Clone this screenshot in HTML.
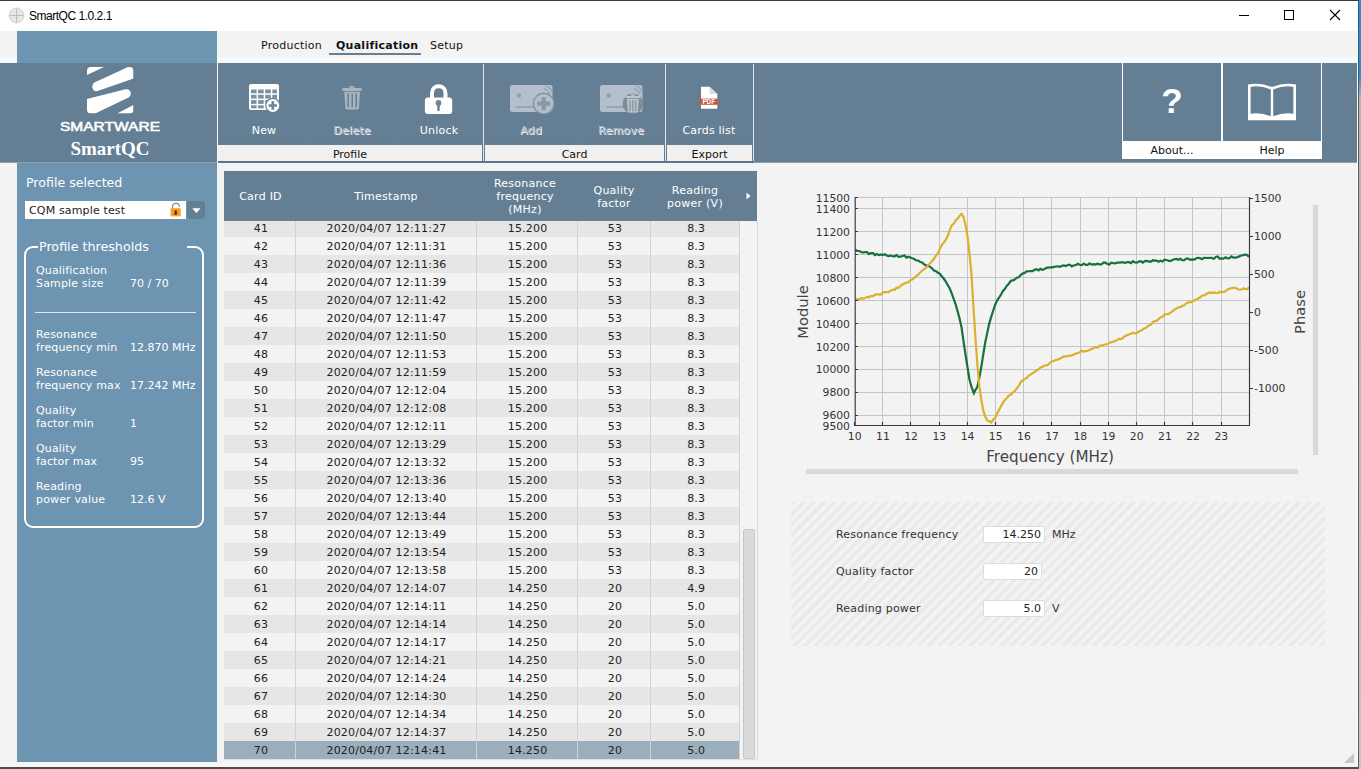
<!DOCTYPE html>
<html lang="en"><head><meta charset="utf-8"><title>SmartQC 1.0.2.1</title>
<style>
*{box-sizing:border-box;margin:0;padding:0}
html,body{width:1361px;height:769px;overflow:hidden;background:#f3f3f3}
body{position:relative;font-family:"DejaVu Sans","Liberation Sans",sans-serif;font-size:11px;color:#222}
.abs{position:absolute}
#titlebar{left:0;top:0;width:1358px;height:31px;background:#fff}
#topline{left:0;top:0;width:1361px;height:1px;background:#3a3a3a}
#title{left:29px;top:9px;font-family:"Liberation Sans",sans-serif;font-size:12px;letter-spacing:-0.480px;color:#000;line-height:15px}
#sidebar{left:17px;top:31px;width:200px;height:731px;background:#6d94b0}
#band{left:0;top:63px;width:1357px;height:99px;background:#647f94;border-bottom:1px solid #8fa2b0;box-sizing:content-box}
#bandline{left:217px;top:31px;width:1px;height:132px;background:#f4f8fb}
#menu span{position:absolute;top:39px;letter-spacing:0.250px;font-size:11px;line-height:14px;color:#111;white-space:nowrap}
.grp{position:absolute;top:145px;height:16px;background:#f0f0f0;text-align:center;font-size:11px;line-height:19px;color:#111}
.vsep{position:absolute;top:64px;width:1px;height:97px;background:#dfe6eb}
.tbtn{position:absolute;top:124px;width:90px;text-align:center;color:#fff;font-size:11px;line-height:14px;letter-spacing:0.200px}
.tbtn.dis{color:#aebbc6;text-shadow:1px 1px 0 #f4f6f8}
.ul{position:absolute;top:138px;height:1px;background:#5f798d}
#bottomline{left:0;top:767px;width:1361px;height:2px;background:#4c4c4c}
#rightline{left:1358px;top:0;width:1px;height:769px;background:linear-gradient(#1f5b86 0,#1f5b86 75px,#5c5c5c 100px,#5c5c5c 100%)}
#rightline2{left:1359px;top:0;width:2px;height:769px;background:linear-gradient(#3c8dbe 0,#3c8dbe 75px,#b4b4b4 100px,#c4c4c4 100%)}
.sb{color:#fff;position:absolute;white-space:nowrap}
.lbl{font-size:11px;line-height:13px;letter-spacing:0.150px}
#thead{left:224px;top:171px;width:533px;height:50px;background:#647f94}
.th{position:absolute;color:#fff;font-size:11px;letter-spacing:0.250px;line-height:13px;text-align:center;transform:translate(-50%,-50%);white-space:nowrap}
.row{position:absolute;left:224px;width:515px;height:18px}
.row.o{background:#e6e6e6}
.row.e{background:#f3f3f3}
.row.sel{background:#9aaebc}
.row span{position:absolute;top:1px;letter-spacing:0.200px;line-height:18px;font-size:11px;color:#222;text-align:center;transform:translateX(-50%);white-space:nowrap}
.csep{position:absolute;top:221px;width:1px;height:538px;background:#d2d2d2}
</style></head>
<body>
<div class="abs" id="titlebar"></div>
<div class="abs" id="topline"></div>
<svg class="abs" style="left:7.500px;top:7px" width="17" height="17" viewBox="0 0 17 17"><circle cx="8.5" cy="8.5" r="7.5" fill="#e6e6e6" stroke="#d4d4d4" stroke-width="1"/><path d="M8.5 1.5V15.5M1.5 8.5H15.5" stroke="#bdbdbd" stroke-width="1" fill="none"/></svg>
<div class="abs" id="title">SmartQC 1.0.2.1</div>
<svg class="abs" style="left:1230px;top:5px" width="120" height="22" viewBox="0 0 120 22"><path d="M9 10.5H19" stroke="#000" stroke-width="1" fill="none"/><rect x="54.5" y="5.5" width="9" height="9" fill="none" stroke="#000" stroke-width="1"/><path d="M100 5L110 15M110 5L100 15" stroke="#000" stroke-width="1.1" fill="none"/></svg>
<div class="abs" style="left:0;top:57px;width:1357px;height:6px;background:#f6f8fa"></div>
<div class="abs" id="sidebar"></div>
<div class="abs" id="band"></div>
<div class="abs" id="bandline"></div>
<div id="menu">
<span style="left:261px">Production</span>
<span style="left:336px;font-weight:bold">Qualification</span>
<span style="left:430px">Setup</span>
</div>
<div class="abs" style="left:329px;top:53px;width:92px;height:2px;background:#647f94"></div>
<div class="grp" style="left:218px;width:264px">Profile</div>
<div class="grp" style="left:485px;width:179px">Card</div>
<div class="grp" style="left:667px;width:85px">Export</div>
<div class="vsep" style="left:483px"></div>
<div class="vsep" style="left:665px"></div>
<div class="vsep" style="left:753px"></div>
<div class="tbtn" style="left:219px">New</div>
<div class="tbtn dis" style="left:307px">Delete</div>
<div class="tbtn" style="left:394px">Unlock</div>
<div class="tbtn dis" style="left:486px">Add</div>
<div class="tbtn dis" style="left:576px">Remove</div>
<div class="tbtn" style="left:664px">Cards list</div>
<div class="ul" style="left:222px;width:84px"></div>
<div class="ul" style="left:310px;width:84px"></div>
<div class="ul" style="left:397px;width:84px"></div>
<div class="ul" style="left:490px;width:84px"></div>
<div class="ul" style="left:580px;width:82px"></div>
<div class="ul" style="left:669px;width:82px"></div>
<!-- about/help -->
<div class="abs" style="left:1122px;top:63px;width:200px;height:96px;background:#fff"></div>
<div class="abs" style="left:1123px;top:63px;width:98px;height:78px;background:#647f94"></div>
<div class="abs" style="left:1223px;top:63px;width:98px;height:78px;background:#647f94"></div>
<div class="abs" style="left:1123px;top:144px;width:98px;text-align:center;font-size:11px;line-height:14px;color:#111">About...</div>
<div class="abs" style="left:1223px;top:144px;width:98px;text-align:center;font-size:11px;line-height:14px;color:#111">Help</div>
<div class="abs" style="left:1123px;top:81px;width:98px;text-align:center;font-family:'Liberation Sans',sans-serif;font-weight:bold;font-size:35px;line-height:40px;color:#fff">?</div>
<svg class="abs" style="left:1246px;top:82px" width="52" height="40" viewBox="0 0 52 40"><path d="M2 2.500Q13 0 26 5Q39 0 50 2.500V38.300H2Z" fill="#fff"/><path d="M4.600 4.900Q14 3 24.800 7.600V34.300Q14 30.200 4.600 31.800Z" fill="#647f94"/><path d="M47.400 4.900Q38 3 27.200 7.600V34.300Q38 30.200 47.400 31.800Z" fill="#647f94"/><path d="M2 5.500V8M50 5.500V8" stroke="#647f94" stroke-width="0" fill="none"/></svg>
<!-- New: table with plus -->
<svg class="abs" style="left:248px;top:83px" width="34" height="30" viewBox="0 0 34 30">
<rect x="1" y="1" width="30" height="26" rx="2" fill="#fff"/>
<g fill="#7b909f">
<rect x="3" y="6.500" width="5.600" height="3.800"/><rect x="10.100" y="6.500" width="5.600" height="3.800"/><rect x="17.200" y="6.500" width="5.600" height="3.800"/><rect x="24.300" y="6.500" width="4.700" height="3.800"/>
<rect x="3" y="11.800" width="5.600" height="3.800"/><rect x="10.100" y="11.800" width="5.600" height="3.800"/><rect x="17.200" y="11.800" width="5.600" height="3.800"/><rect x="24.300" y="11.800" width="4.700" height="3.800"/>
<rect x="3" y="17.100" width="5.600" height="3.800"/><rect x="10.100" y="17.100" width="5.600" height="3.800"/><rect x="17.200" y="17.100" width="5.600" height="3.800"/>
<rect x="3" y="22.300" width="5.600" height="3"/><rect x="10.100" y="22.300" width="5.600" height="3"/>
</g>
<circle cx="24.800" cy="22.500" r="7.700" fill="#647f94"/>
<circle cx="24.800" cy="22.500" r="6.500" fill="#fff"/>
<path d="M24.800 18.300V26.700M20.600 22.500H29" stroke="#6e8597" stroke-width="2.700" fill="none"/>
</svg>
<!-- Delete: trash (disabled) -->
<svg class="abs" style="left:341px;top:85px" width="22" height="27" viewBox="0 0 22 27">
<g fill="#a7b5c1">
<rect x="8.200" y="0.900" width="5.200" height="1.900" rx="0.600"/>
<rect x="1.300" y="3.100" width="19.400" height="2.800" rx="0.900"/>
<path d="M3.300 6.800H19L17.900 23.200Q17.800 24.400 16.600 24.400H5.700Q4.500 24.400 4.400 23.200Z"/>
</g>
<path d="M7.200 8.500V22.300M11.200 8.500V22.300M15.200 8.500V22.300" stroke="#647f94" stroke-width="1.500" fill="none"/>
</svg>
<!-- Unlock: padlock -->
<svg class="abs" style="left:423px;top:83px" width="31" height="32" viewBox="0 0 31 32">
<path d="M9 15V10C9 1 22.500 1 22.500 10V15" fill="none" stroke="#fff" stroke-width="4"/>
<rect x="1.900" y="14.500" width="27.300" height="16.400" rx="3" fill="#fff"/>
<circle cx="15.500" cy="20" r="2.900" fill="#6e8597"/><path d="M14 21H17L16.600 28H14.400Z" fill="#6e8597"/>
</svg>
<!-- Add: card + plus (disabled) -->
<svg class="abs" style="left:508px;top:82px" width="50" height="34" viewBox="0 0 50 34">
<rect x="2" y="3" width="42.500" height="27" rx="2.500" fill="#b3c0cb"/>
<circle cx="10.800" cy="13.500" r="2.300" fill="#8f9fac"/>
<path d="M8 25H26" stroke="#8f9fac" stroke-width="1.600"/>
<path d="M36 6.500C39 7.500 41 9.500 41.800 12.500M37.500 3.800C41.500 5 44 8 44.800 11.500" fill="none" stroke="#8f9fac" stroke-width="1.200"/>
<circle cx="35.700" cy="21.700" r="10.300" fill="#b3c0cb" stroke="#7d8e9c" stroke-width="1.100"/>
<path d="M35.700 15.200V28.200M29.200 21.700H42.200" stroke="#8998a5" stroke-width="4.200" fill="none"/>
</svg>
<!-- Remove: card + trash (disabled) -->
<svg class="abs" style="left:598px;top:82px" width="50" height="34" viewBox="0 0 50 34">
<rect x="2" y="3" width="42.500" height="27" rx="2.500" fill="#b3c0cb"/>
<circle cx="10.800" cy="13.500" r="2.300" fill="#8f9fac"/>
<path d="M8 25H26" stroke="#8f9fac" stroke-width="1.600"/>
<path d="M36 6.500C39 7.500 41 9.500 41.800 12.500M37.500 3.800C41.500 5 44 8 44.800 11.500" fill="none" stroke="#8f9fac" stroke-width="1.200"/>
<circle cx="34.800" cy="21.700" r="10.300" fill="#7f8d99"/>
<g fill="#b9c5cf"><rect x="32.700" y="12.200" width="4.400" height="1.600" rx="0.500"/><rect x="27.600" y="13.900" width="14.600" height="2.100" rx="0.700"/><path d="M29 16.800H40.800L39.900 30.600H29.900Z"/></g>
<path d="M32 18.200V29.300M34.900 18.200V29.300M37.800 18.200V29.300" stroke="#7f8d99" stroke-width="1.200" fill="none"/></svg>
<!-- Cards list: pdf -->
<svg class="abs" style="left:698px;top:85px" width="22" height="26" viewBox="0 0 22 26">
<path d="M3 1.800H11.500L19.300 9V23.800H3Z" fill="#fff"/>
<path d="M11.500 1.800V9H19.300Z" fill="#d5dde3"/>
<rect x="1.600" y="13.600" width="18.300" height="6.200" fill="#c9573f"/>
<text x="10.700" y="19" font-family="Liberation Sans, sans-serif" font-weight="bold" font-size="6.300" fill="#fff" text-anchor="middle">PDF</text>
</svg>
<svg class="abs" style="left:87px;top:67px" width="47" height="47" viewBox="0 0 47 47">
<defs><clipPath id="lc"><rect x="0" y="0" width="46.500" height="46.500" rx="4" ry="4"/></clipPath></defs>
<g clip-path="url(#lc)" fill="#fff">
<path d="M0 0H17L0 8Z"/>
<path d="M41 0H46.500V11.600L10.500 24C5.500 25.500 3 18 8 15.200Z"/>
<path d="M0 32L38.500 22.300C43.500 21 46 28 41.500 30.500L8.200 46.500H0Z"/>
<path d="M30 46.500L46.500 38V46.500Z"/>
</g></svg>
<svg class="abs" style="left:58px;top:119px" width="104" height="14" viewBox="0 0 104 14"><text x="2" y="11.700" font-family="Liberation Sans, sans-serif" font-size="12.800" fill="#fff" textLength="100" lengthAdjust="spacingAndGlyphs" stroke="#fff" stroke-width="0.550">SMARTWARE</text></svg>
<div class="sb" style="left:17px;top:138px;width:186px;text-align:center;font-family:'Liberation Serif',serif;font-weight:bold;font-size:19px;line-height:22px">SmartQC</div>
<div class="sb" style="left:26px;top:175px;font-size:12.600px;line-height:16px">Profile selected</div>
<div class="abs" style="left:25px;top:201px;width:161px;height:18px;background:#fff;font-size:11px;line-height:20px;letter-spacing:0.150px;padding-left:4px;color:#222">CQM sample test</div>
<svg class="abs" style="left:169px;top:202px" width="14" height="16" viewBox="0 0 14 16"><path d="M3.600 6.500V4.200C3.600 0.400 10.300 0.400 10.300 4.200V5" fill="none" stroke="#8f8676" stroke-width="1.100"/><rect x="1.500" y="6.100" width="10.300" height="8.300" fill="#f2b030"/><rect x="3" y="7.300" width="7.300" height="6" fill="#ec9a2a"/><path d="M5.600 8.300H7.800V10.200L8.200 12.800H5.200L5.600 10.200Z" fill="#8a1c10"/></svg>
<div class="abs" style="left:187px;top:201px;width:18px;height:18px;background:#647f94;border-radius:3px"></div>
<svg class="abs" style="left:192px;top:207.500px" width="9" height="6" viewBox="0 0 9 6"><path d="M0.300 0.300H8.500L4.400 5Z" fill="#fff"/></svg>
<div class="abs" style="left:24px;top:246px;width:180px;height:282px;border:2px solid #fff;border-radius:9px"></div>
<div class="abs" style="left:37.500px;top:238px;width:149.500px;height:16px;background:#6d94b0"></div>
<div class="sb" style="left:39px;top:239px;font-size:12.700px;line-height:16px">Profile thresholds</div>
<div class="abs" style="left:35px;top:312px;width:161px;height:1px;background:#dfe8ee"></div>
<div class="sb lbl" style="left:36px;top:264px">Qualification<br>Sample size</div><div class="sb lbl" style="letter-spacing:0;left:130px;top:277px">70 / 70</div>
<div class="sb lbl" style="left:36px;top:328px">Resonance<br>frequency min</div><div class="sb lbl" style="letter-spacing:0;left:130px;top:341px">12.870 MHz</div>
<div class="sb lbl" style="left:36px;top:366px">Resonance<br>frequency max</div><div class="sb lbl" style="letter-spacing:0;left:130px;top:379px">17.242 MHz</div>
<div class="sb lbl" style="left:36px;top:404px">Quality<br>factor min</div><div class="sb lbl" style="letter-spacing:0;left:130px;top:417px">1</div>
<div class="sb lbl" style="left:36px;top:442px">Quality<br>factor max</div><div class="sb lbl" style="letter-spacing:0;left:130px;top:455px">95</div>
<div class="sb lbl" style="left:36px;top:480px">Reading<br>power value</div><div class="sb lbl" style="letter-spacing:0;left:130px;top:493px">12.6 V</div>
<div class="abs" style="left:224px;top:221px;width:533px;height:538px;background:#f3f3f3"></div>
<div class="row o" style="top:219px"><span style="left:37px">41</span><span style="left:162.5px">2020/04/07 12:11:27</span><span style="left:303.6px">15.200</span><span style="left:391px">53</span><span style="left:472.2px">8.3</span></div>
<div class="row e" style="top:237px"><span style="left:37px">42</span><span style="left:162.5px">2020/04/07 12:11:31</span><span style="left:303.6px">15.200</span><span style="left:391px">53</span><span style="left:472.2px">8.3</span></div>
<div class="row o" style="top:255px"><span style="left:37px">43</span><span style="left:162.5px">2020/04/07 12:11:36</span><span style="left:303.6px">15.200</span><span style="left:391px">53</span><span style="left:472.2px">8.3</span></div>
<div class="row e" style="top:273px"><span style="left:37px">44</span><span style="left:162.5px">2020/04/07 12:11:39</span><span style="left:303.6px">15.200</span><span style="left:391px">53</span><span style="left:472.2px">8.3</span></div>
<div class="row o" style="top:291px"><span style="left:37px">45</span><span style="left:162.5px">2020/04/07 12:11:42</span><span style="left:303.6px">15.200</span><span style="left:391px">53</span><span style="left:472.2px">8.3</span></div>
<div class="row e" style="top:309px"><span style="left:37px">46</span><span style="left:162.5px">2020/04/07 12:11:47</span><span style="left:303.6px">15.200</span><span style="left:391px">53</span><span style="left:472.2px">8.3</span></div>
<div class="row o" style="top:327px"><span style="left:37px">47</span><span style="left:162.5px">2020/04/07 12:11:50</span><span style="left:303.6px">15.200</span><span style="left:391px">53</span><span style="left:472.2px">8.3</span></div>
<div class="row e" style="top:345px"><span style="left:37px">48</span><span style="left:162.5px">2020/04/07 12:11:53</span><span style="left:303.6px">15.200</span><span style="left:391px">53</span><span style="left:472.2px">8.3</span></div>
<div class="row o" style="top:363px"><span style="left:37px">49</span><span style="left:162.5px">2020/04/07 12:11:59</span><span style="left:303.6px">15.200</span><span style="left:391px">53</span><span style="left:472.2px">8.3</span></div>
<div class="row e" style="top:381px"><span style="left:37px">50</span><span style="left:162.5px">2020/04/07 12:12:04</span><span style="left:303.6px">15.200</span><span style="left:391px">53</span><span style="left:472.2px">8.3</span></div>
<div class="row o" style="top:399px"><span style="left:37px">51</span><span style="left:162.5px">2020/04/07 12:12:08</span><span style="left:303.6px">15.200</span><span style="left:391px">53</span><span style="left:472.2px">8.3</span></div>
<div class="row e" style="top:417px"><span style="left:37px">52</span><span style="left:162.5px">2020/04/07 12:12:11</span><span style="left:303.6px">15.200</span><span style="left:391px">53</span><span style="left:472.2px">8.3</span></div>
<div class="row o" style="top:435px"><span style="left:37px">53</span><span style="left:162.5px">2020/04/07 12:13:29</span><span style="left:303.6px">15.200</span><span style="left:391px">53</span><span style="left:472.2px">8.3</span></div>
<div class="row e" style="top:453px"><span style="left:37px">54</span><span style="left:162.5px">2020/04/07 12:13:32</span><span style="left:303.6px">15.200</span><span style="left:391px">53</span><span style="left:472.2px">8.3</span></div>
<div class="row o" style="top:471px"><span style="left:37px">55</span><span style="left:162.5px">2020/04/07 12:13:36</span><span style="left:303.6px">15.200</span><span style="left:391px">53</span><span style="left:472.2px">8.3</span></div>
<div class="row e" style="top:489px"><span style="left:37px">56</span><span style="left:162.5px">2020/04/07 12:13:40</span><span style="left:303.6px">15.200</span><span style="left:391px">53</span><span style="left:472.2px">8.3</span></div>
<div class="row o" style="top:507px"><span style="left:37px">57</span><span style="left:162.5px">2020/04/07 12:13:44</span><span style="left:303.6px">15.200</span><span style="left:391px">53</span><span style="left:472.2px">8.3</span></div>
<div class="row e" style="top:525px"><span style="left:37px">58</span><span style="left:162.5px">2020/04/07 12:13:49</span><span style="left:303.6px">15.200</span><span style="left:391px">53</span><span style="left:472.2px">8.3</span></div>
<div class="row o" style="top:543px"><span style="left:37px">59</span><span style="left:162.5px">2020/04/07 12:13:54</span><span style="left:303.6px">15.200</span><span style="left:391px">53</span><span style="left:472.2px">8.3</span></div>
<div class="row e" style="top:561px"><span style="left:37px">60</span><span style="left:162.5px">2020/04/07 12:13:58</span><span style="left:303.6px">15.200</span><span style="left:391px">53</span><span style="left:472.2px">8.3</span></div>
<div class="row o" style="top:579px"><span style="left:37px">61</span><span style="left:162.5px">2020/04/07 12:14:07</span><span style="left:303.6px">14.250</span><span style="left:391px">20</span><span style="left:472.2px">4.9</span></div>
<div class="row e" style="top:597px"><span style="left:37px">62</span><span style="left:162.5px">2020/04/07 12:14:11</span><span style="left:303.6px">14.250</span><span style="left:391px">20</span><span style="left:472.2px">5.0</span></div>
<div class="row o" style="top:615px"><span style="left:37px">63</span><span style="left:162.5px">2020/04/07 12:14:14</span><span style="left:303.6px">14.250</span><span style="left:391px">20</span><span style="left:472.2px">5.0</span></div>
<div class="row e" style="top:633px"><span style="left:37px">64</span><span style="left:162.5px">2020/04/07 12:14:17</span><span style="left:303.6px">14.250</span><span style="left:391px">20</span><span style="left:472.2px">5.0</span></div>
<div class="row o" style="top:651px"><span style="left:37px">65</span><span style="left:162.5px">2020/04/07 12:14:21</span><span style="left:303.6px">14.250</span><span style="left:391px">20</span><span style="left:472.2px">5.0</span></div>
<div class="row e" style="top:669px"><span style="left:37px">66</span><span style="left:162.5px">2020/04/07 12:14:24</span><span style="left:303.6px">14.250</span><span style="left:391px">20</span><span style="left:472.2px">5.0</span></div>
<div class="row o" style="top:687px"><span style="left:37px">67</span><span style="left:162.5px">2020/04/07 12:14:30</span><span style="left:303.6px">14.250</span><span style="left:391px">20</span><span style="left:472.2px">5.0</span></div>
<div class="row e" style="top:705px"><span style="left:37px">68</span><span style="left:162.5px">2020/04/07 12:14:34</span><span style="left:303.6px">14.250</span><span style="left:391px">20</span><span style="left:472.2px">5.0</span></div>
<div class="row o" style="top:723px"><span style="left:37px">69</span><span style="left:162.5px">2020/04/07 12:14:37</span><span style="left:303.6px">14.250</span><span style="left:391px">20</span><span style="left:472.2px">5.0</span></div>
<div class="row sel" style="top:741px"><span style="left:37px">70</span><span style="left:162.5px">2020/04/07 12:14:41</span><span style="left:303.6px">14.250</span><span style="left:391px">20</span><span style="left:472.2px">5.0</span></div>
<div class="csep" style="left:295px"></div>
<div class="csep" style="left:476px"></div>
<div class="csep" style="left:577px"></div>
<div class="csep" style="left:650px"></div>
<div class="csep" style="left:739px"></div>
<div class="abs" style="left:757px;top:221px;width:1px;height:539px;background:#d9d9d9"></div>
<div class="abs" style="left:224px;top:759px;width:534px;height:1px;background:#e0e0e0"></div>
<div class="abs" style="left:743px;top:529px;width:12px;height:230px;background:#dadada;border:1px solid #c6c6c6;border-radius:2px"></div>
<div class="abs" id="thead"></div>
<div class="th" style="left:260.5px;top:196px">Card ID</div>
<div class="th" style="left:386px;top:196px">Timestamp</div>
<div class="th" style="left:525px;top:196px">Resonance<br>frequency<br>(MHz)</div>
<div class="th" style="left:614px;top:197px">Quality<br>factor</div>
<div class="th" style="left:695px;top:197px">Reading<br>power (V)</div>
<svg class="abs" style="left:746px;top:192px" width="5" height="8" viewBox="0 0 5 8"><path d="M0.500 0.500L4.500 4L0.500 7.500Z" fill="#fff"/></svg>
<svg class="abs" style="left:780px;top:170px" width="578" height="320" viewBox="780 170 578 320" font-family="DejaVu Sans, Liberation Sans, sans-serif">
<path d="M882.5 197 V426M910.5 197 V426M939.5 197 V426M967.5 197 V426M995.5 197 V426M1023.5 197 V426M1051.5 197 V426M1080.5 197 V426M1108.5 197 V426M1136.5 197 V426M1164.5 197 V426M1192.5 197 V426M1221.5 197 V426M855 208.5 H1250M855 231.5 H1250M855 254.5 H1250M855 277.5 H1250M855 300.5 H1250M855 323.5 H1250M855 346.5 H1250M855 369.5 H1250M855 392.5 H1250M855 415.5 H1250" stroke="#c4c4c4" stroke-width="1" fill="none"/>
<path d="M855 197.5 H1250" stroke="#c4c4c4" stroke-width="1" fill="none"/>
<path d="M855.2 249.63L857.17 250.81L859.14 251.02L861.11 251.98L863.08 252.55L865.05 252.01L867.02 252.05L868.99 254.11L870.96 253.01L872.93 253.15L874.9 255.07L876.87 254.09L878.84 255.12L880.81 254.51L882.78 255.07L884.75 254.15L886.72 255.44L888.69 256.16L890.66 255.56L892.63 256.25L894.6 256.28L896.57 255.07L898.54 256.82L900.51 256.55L902.48 255.99L904.45 255.48L906.42 257.59L908.39 256.78L910.36 257.42L912.33 258.32L914.3 259.04L916.27 260.32L918.24 260.5L920.21 262.07L922.18 262.55L924.15 264.41L926.12 265.52L928.09 265.64L930.06 266.88L932.03 268.25L934 270.54L935.97 271.16L937.94 272.72L939.91 273.9L941.88 276.49L943.85 278.76L945.82 281.48L947.79 285.11L949.76 288.56L951.73 293.43L953.7 298.81L955.67 304.4L957.64 311.33L959.61 318.79L961.58 327.62L963.55 341.35L965.52 354.55L967.49 367.21L969.46 379.52L971.43 386.73L973.9 393.16L975.37 390.05L977.34 387.04L979.31 378.05L981.28 366.99L983.25 354.65L985.22 342.44L987.19 333.32L989.16 323.84L991.13 317.13L993.1 311L995.07 304.94L997.04 300.5L999.01 297.75L1000.98 294.72L1002.95 290.96L1004.92 288.83L1006.89 285.73L1008.86 283.72L1010.83 280.84L1012.8 280.45L1014.77 279.48L1016.74 277.7L1018.71 277.24L1020.68 275.04L1022.65 273.46L1024.62 272.91L1026.59 271.36L1028.56 271.25L1030.53 271.21L1032.5 271.17L1034.47 269.84L1036.44 269.18L1038.41 270.39L1040.38 268.89L1042.35 269.79L1044.32 269.27L1046.29 267.84L1048.26 267.61L1050.23 267.36L1052.2 267.32L1054.17 266.91L1056.14 266.52L1058.11 266.35L1060.08 266.8L1062.05 265.73L1064.02 265.46L1065.99 266.08L1067.96 264.82L1069.93 264.89L1071.9 266.46L1073.87 265.26L1075.84 265.25L1077.81 263.85L1079.78 264.75L1081.75 265.07L1083.72 263.61L1085.69 264.95L1087.66 264.89L1089.63 263.41L1091.6 264.67L1093.57 264.18L1095.54 264.6L1097.51 263.71L1099.48 264.46L1101.45 264.44L1103.42 262.61L1105.39 262.6L1107.36 263.98L1109.33 264.58L1111.3 262.76L1113.27 263.15L1115.24 263.39L1117.21 262.63L1119.18 262.64L1121.15 262.43L1123.12 262.47L1125.09 262.92L1127.06 262.11L1129.03 262.2L1131 263.07L1132.97 261.16L1134.94 262.38L1136.91 262.69L1138.88 261.57L1140.85 261.26L1142.82 262.57L1144.79 261.11L1146.76 260.86L1148.73 261.33L1150.7 261.84L1152.67 260.3L1154.64 260.7L1156.61 260.61L1158.58 261.68L1160.55 260.62L1162.52 261.49L1164.49 259.74L1166.46 260.02L1168.43 260.65L1170.4 261.08L1172.37 259.93L1174.34 259.27L1176.31 258.91L1178.28 259.79L1180.25 258.87L1182.22 260.26L1184.19 260.24L1186.16 258.55L1188.13 258.68L1190.1 259.86L1192.07 259.36L1194.04 259.65L1196.01 258.44L1197.98 257.82L1199.95 258.11L1201.92 259.22L1203.89 257.86L1205.86 257.94L1207.83 258.01L1209.8 257.92L1211.77 257.8L1213.74 258.95L1215.71 257L1217.68 256.54L1219.65 258.72L1221.62 258.47L1223.59 258.64L1225.56 257.2L1227.53 258.36L1229.5 258.21L1231.47 256.4L1233.44 257.58L1235.41 257.7L1237.38 257.11L1239.35 256.37L1241.32 255.49L1243.29 255.16L1245.26 254.4L1247.23 255.13L1249 256.96" stroke="#17703e" stroke-width="2.200" fill="none" stroke-linejoin="miter"/>
<path d="M855.2 299.64L857.17 298.92L859.14 299.72L861.11 298L863.08 298.72L865.05 297.96L867.02 296.87L868.99 297.53L870.96 295.97L872.93 296.21L874.9 294.87L876.87 294.33L878.84 294.44L880.81 294.68L882.78 292.6L884.75 292.09L886.72 292.17L888.69 292.08L890.66 290.65L892.63 289.6L894.6 290.02L896.57 287.56L898.54 287.92L900.51 285.89L902.48 284.55L904.45 283.41L906.42 282.63L908.39 282.36L910.36 280.25L912.33 279.39L914.3 277.89L916.27 275.95L918.24 274.61L920.21 272.38L922.18 270.77L924.15 269L926.12 267.6L928.09 265.32L930.06 263.22L932.03 261.25L934 258.49L935.97 255.71L937.94 253.09L939.91 248.85L941.88 244.87L943.85 242.44L945.82 239.65L947.79 235.73L949.76 230.4L951.73 225.33L953.7 223.75L955.67 220.52L957.64 218.56L959.61 215.89L961.58 213.63L963.55 217.11L965.52 225.21L967.49 236.24L969.46 253.44L971.43 273.53L973.4 306.49L975.37 336.77L977.34 363.96L979.31 386.19L981.28 399.5L983.25 410.29L985.22 416.31L987.19 420.5L989.16 421.15L991.13 422.58L993.1 419.55L995.07 418.01L997.04 413.88L999.01 410.04L1000.98 406.21L1002.95 402.78L1004.92 399.91L1006.89 397.95L1008.86 395.54L1010.83 394.65L1012.8 392.73L1014.77 391.2L1016.74 388.6L1018.71 385.93L1020.68 382.06L1022.65 380.31L1024.62 379.03L1026.59 378.23L1028.56 375.64L1030.53 374.63L1032.5 373.2L1034.47 372.09L1036.44 370.45L1038.41 369.42L1040.38 367.43L1042.35 366.68L1044.32 365.6L1046.29 365.52L1048.26 364.74L1050.23 362.4L1052.2 361.54L1054.17 360.72L1056.14 359.81L1058.11 359.35L1060.08 358.65L1062.05 357.42L1064.02 356.31L1065.99 356.6L1067.96 355.84L1069.93 355.56L1071.9 355.66L1073.87 354.47L1075.84 353.45L1077.81 352.99L1079.78 352.43L1081.75 350.51L1083.72 351.82L1085.69 351.06L1087.66 350.76L1089.63 350.08L1091.6 348.7L1093.57 348.21L1095.54 347.06L1097.51 347.67L1099.48 345.89L1101.45 345.31L1103.42 345L1105.39 344.31L1107.36 344.09L1109.33 342.9L1111.3 342.2L1113.27 341.86L1115.24 340.8L1117.21 340.26L1119.18 338.7L1121.15 339.17L1123.12 337.74L1125.09 335.95L1127.06 335.14L1129.03 334.45L1131 333.81L1132.97 332.66L1134.94 333.44L1136.91 333.05L1138.88 331.34L1140.85 330.7L1142.82 329.28L1144.79 328.33L1146.76 327.16L1148.73 325.54L1150.7 324.82L1152.67 322.36L1154.64 320.83L1156.61 321.03L1158.58 319.13L1160.55 317.31L1162.52 316.68L1164.49 314.64L1166.46 314.28L1168.43 313.96L1170.4 312.71L1172.37 311.37L1174.34 309.59L1176.31 308.7L1178.28 307.31L1180.25 307.26L1182.22 305.85L1184.19 305.28L1186.16 303.53L1188.13 302.36L1190.1 302.38L1192.07 301.7L1194.04 300.48L1196.01 299.43L1197.98 298.58L1199.95 297.57L1201.92 295.78L1203.89 295.45L1205.86 294.27L1207.83 293.05L1209.8 292.65L1211.77 292.84L1213.74 292.41L1215.71 293.02L1217.68 293.23L1219.65 291.67L1221.62 292.37L1223.59 291.92L1225.56 291.32L1227.53 289.53L1229.5 288.7L1231.47 288.17L1233.44 287.95L1235.41 287.91L1237.38 289.04L1239.35 289.77L1241.32 289.53L1243.29 288.43L1245.26 288.86L1247.23 289.22L1249 287.08" stroke="#dcb02c" stroke-width="2.200" fill="none" stroke-linejoin="round"/>
<path d="M855.2 197 V426M1249.5 197 V426M855 425.5 H1250M854.5 422 V426M882.5 422 V426M910.5 422 V426M939.5 422 V426M967.5 422 V426M995.5 422 V426M1023.5 422 V426M1051.5 422 V426M1080.5 422 V426M1108.5 422 V426M1136.5 422 V426M1164.5 422 V426M1192.5 422 V426M1221.5 422 V426M855 197.5 H858M855 208.5 H858M855 231.5 H858M855 254.5 H858M855 277.5 H858M855 300.5 H858M855 323.5 H858M855 346.5 H858M855 369.5 H858M855 392.5 H858M855 415.5 H858M1250 198.5 H1253M1250 236.5 H1253M1250 274.5 H1253M1250 312.5 H1253M1250 350.5 H1253M1250 388.5 H1253" stroke="#383838" stroke-width="1.150" fill="none"/>
<g font-size="10.800" fill="#333">
<text x="850" y="201.5" text-anchor="end">11500</text><text x="850" y="212.97" text-anchor="end">11400</text><text x="850" y="235.9" text-anchor="end">11200</text><text x="850" y="258.82" text-anchor="end">11000</text><text x="850" y="281.75" text-anchor="end">10800</text><text x="850" y="304.69" text-anchor="end">10600</text><text x="850" y="327.62" text-anchor="end">10400</text><text x="850" y="350.55" text-anchor="end">10200</text><text x="850" y="373.47" text-anchor="end">10000</text><text x="850" y="396.41" text-anchor="end">9800</text><text x="850" y="419.33" text-anchor="end">9600</text><text x="850" y="430.1" text-anchor="end">9500</text>
<text x="1254" y="202">1500</text><text x="1254" y="240">1000</text><text x="1254" y="278">500</text><text x="1254" y="316">0</text><text x="1254" y="354">-500</text><text x="1254" y="392">-1000</text>
<text x="854.7" y="439.900" text-anchor="middle">10</text><text x="882.9" y="439.900" text-anchor="middle">11</text><text x="911.1" y="439.900" text-anchor="middle">12</text><text x="939.3" y="439.900" text-anchor="middle">13</text><text x="967.5" y="439.900" text-anchor="middle">14</text><text x="995.7" y="439.900" text-anchor="middle">15</text><text x="1023.9" y="439.900" text-anchor="middle">16</text><text x="1052.1" y="439.900" text-anchor="middle">17</text><text x="1080.3" y="439.900" text-anchor="middle">18</text><text x="1108.5" y="439.900" text-anchor="middle">19</text><text x="1136.7" y="439.900" text-anchor="middle">20</text><text x="1164.9" y="439.900" text-anchor="middle">21</text><text x="1193.1" y="439.900" text-anchor="middle">22</text><text x="1221.3" y="439.900" text-anchor="middle">23</text>
</g>
<g font-size="15.200" fill="#444">
<text x="1050" y="462" text-anchor="middle">Frequency (MHz)</text>
<text transform="translate(808 312) rotate(-90)" text-anchor="middle" font-size="14.700">Module</text>
<text transform="translate(1305 312) rotate(-90)" text-anchor="middle" font-size="14.700">Phase</text>
</g>
<rect x="806" y="469" width="492" height="5" fill="#d9d9d9"/>
<rect x="1313" y="205" width="5" height="250" fill="#d9d9d9"/>
</svg>
<div class="abs" style="left:791px;top:502px;width:534px;height:144px;background:repeating-linear-gradient(135deg,#eaeaea 0,#eaeaea 3.650px,#f3f3f3 3.650px,#f3f3f3 7.300px)"></div>
<div class="abs" style="left:836px;top:528px;font-size:11px;letter-spacing:0.200px;line-height:14px;color:#333">Resonance frequency</div>
<div class="abs" style="left:836px;top:565px;font-size:11px;letter-spacing:0.200px;line-height:14px;color:#333">Quality factor</div>
<div class="abs" style="left:836px;top:602px;font-size:11px;letter-spacing:0.200px;line-height:14px;color:#333">Reading power</div>
<div class="abs" style="left:983px;top:526px;width:62px;height:17px;background:#fff;border:1px solid #dcdcdc;border-radius:2px;text-align:right;padding-right:3px;font-size:11px;line-height:15px;color:#222">14.250</div>
<div class="abs" style="left:983px;top:563px;width:59px;height:17px;background:#fff;border:1px solid #dcdcdc;border-radius:2px;text-align:right;padding-right:3px;font-size:11px;line-height:15px;color:#222">20</div>
<div class="abs" style="left:983px;top:600px;width:62px;height:17px;background:#fff;border:1px solid #dcdcdc;border-radius:2px;text-align:right;padding-right:3px;font-size:11px;line-height:15px;color:#222">5.0</div>
<div class="abs" style="left:1052px;top:528px;font-size:11px;line-height:14px;color:#333">MHz</div>
<div class="abs" style="left:1052px;top:602px;font-size:11px;line-height:14px;color:#333">V</div>
<svg class="abs" style="left:1343px;top:752px" width="12" height="12" viewBox="0 0 12 12"><path d="M11 1V11H1Z" fill="#c8c8c8"/></svg>
<div class="abs" style="left:0;top:763px;width:1358px;height:4px;background:#f6f6f6"></div>
<div class="abs" id="bottomline"></div>
<div class="abs" style="left:1357px;top:1px;width:1px;height:766px;background:#fdfdfd"></div>
<div class="abs" style="left:218px;top:161px;width:536px;height:2px;background:#5e7488"></div>
<div class="abs" id="rightline"></div>
<div class="abs" id="rightline2"></div>
</body></html>
